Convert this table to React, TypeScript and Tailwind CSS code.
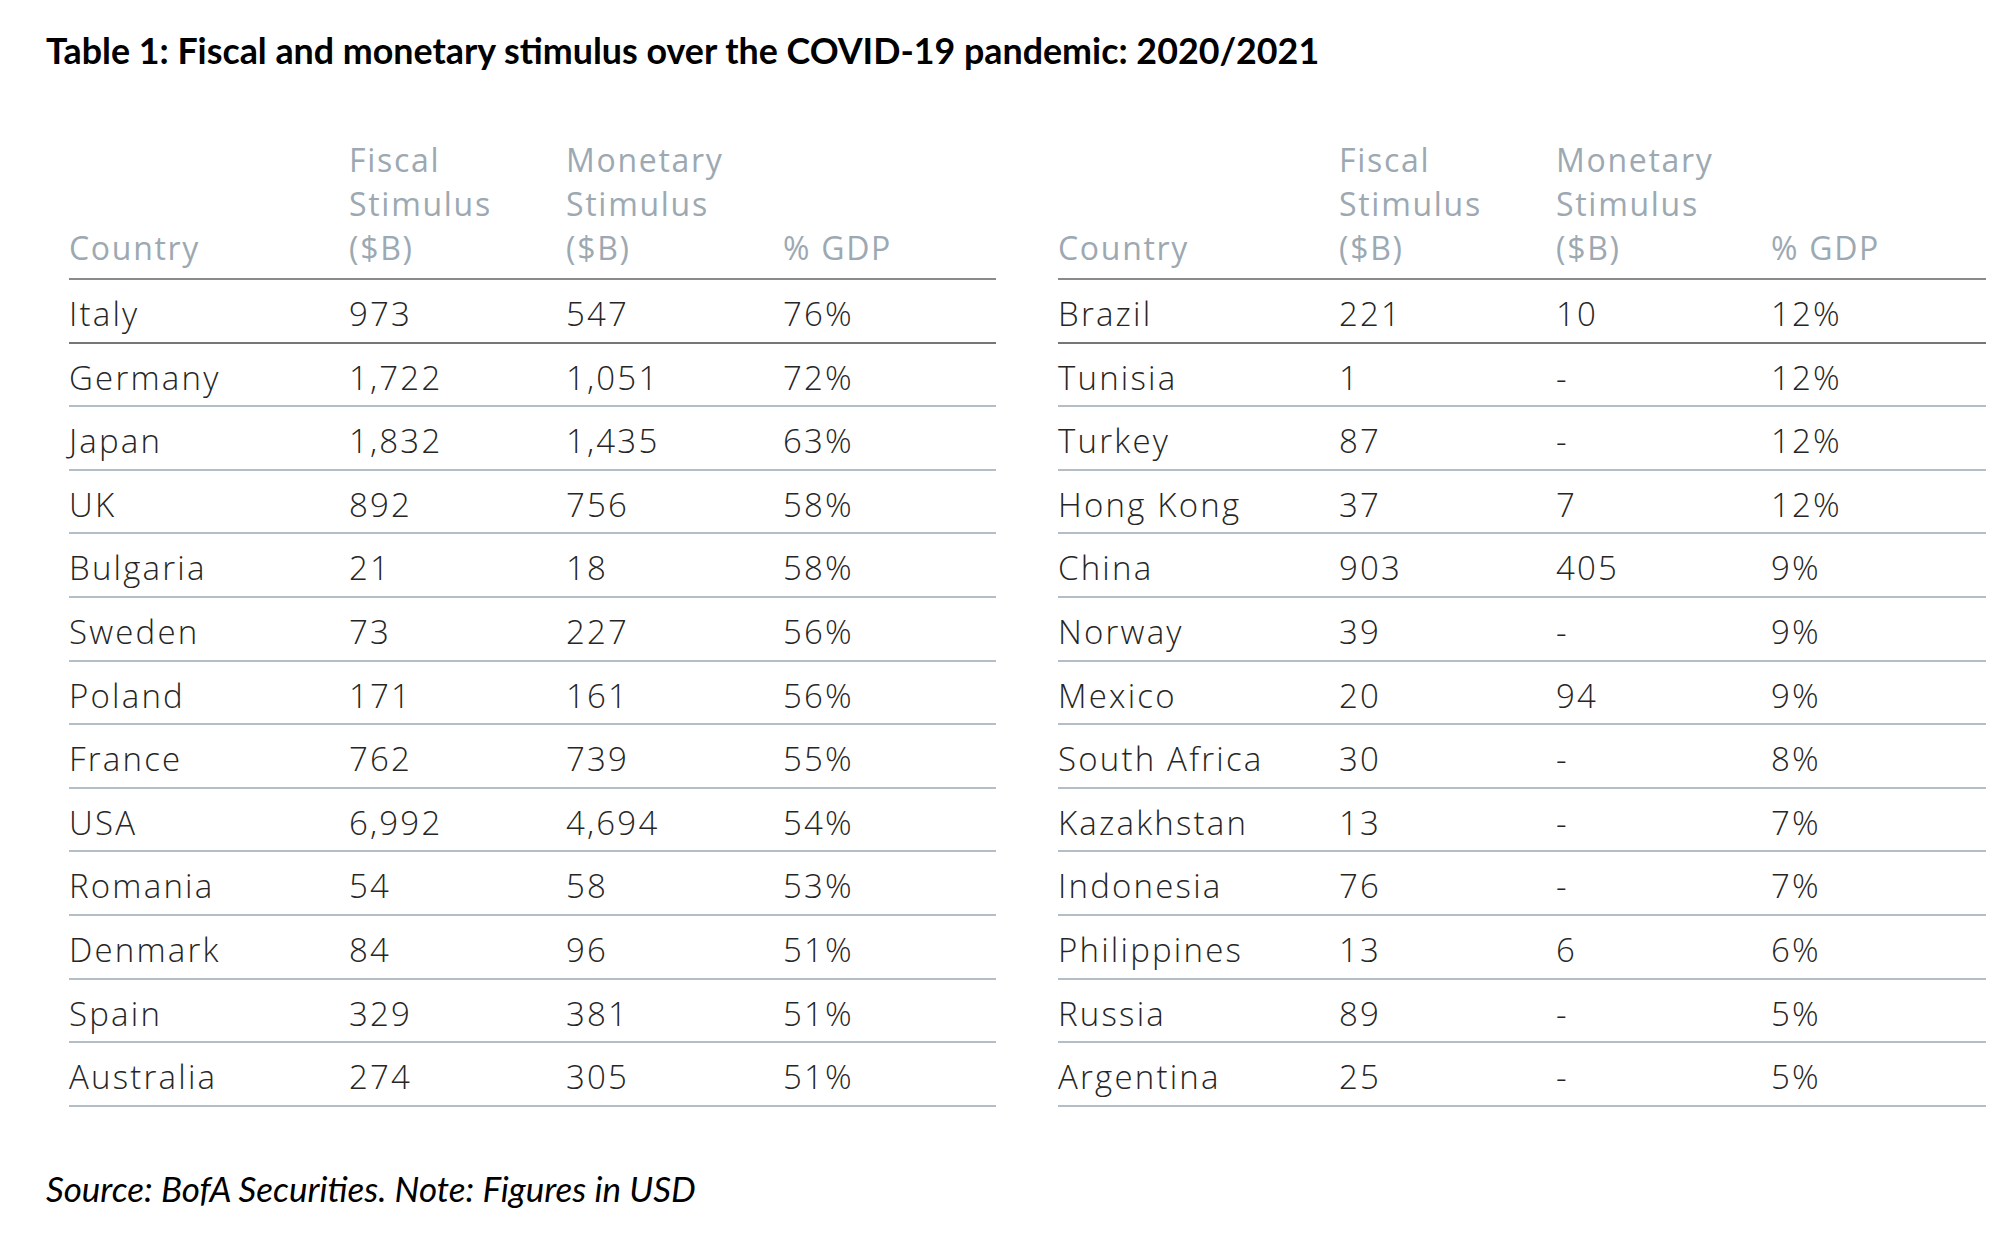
const left: [string, string, string, string][] = [
  ["Italy", "973", "547", "76%"],
  ["Germany", "1,722", "1,051", "72%"],
  ["Japan", "1,832", "1,435", "63%"],
  ["UK", "892", "756", "58%"],
  ["Bulgaria", "21", "18", "58%"],
  ["Sweden", "73", "227", "56%"],
  ["Poland", "171", "161", "56%"],
  ["France", "762", "739", "55%"],
  ["USA", "6,992", "4,694", "54%"],
  ["Romania", "54", "58", "53%"],
  ["Denmark", "84", "96", "51%"],
  ["Spain", "329", "381", "51%"],
  ["Australia", "274", "305", "51%"],
];

const right: [string, string, string, string][] = [
  ["Brazil", "221", "10", "12%"],
  ["Tunisia", "1", "-", "12%"],
  ["Turkey", "87", "-", "12%"],
  ["Hong Kong", "37", "7", "12%"],
  ["China", "903", "405", "9%"],
  ["Norway", "39", "-", "9%"],
  ["Mexico", "20", "94", "9%"],
  ["South Africa", "30", "-", "8%"],
  ["Kazakhstan", "13", "-", "7%"],
  ["Indonesia", "76", "-", "7%"],
  ["Philippines", "13", "6", "6%"],
  ["Russia", "89", "-", "5%"],
  ["Argentina", "25", "-", "5%"],
];

function StimulusTable({ rows, cols }: { rows: [string, string, string, string][]; cols: string }) {
  return (
    <div className="flex flex-col">
      {/* header */}
      <div
        className={`grid ${cols} h-[142px] items-end border-b-2 border-[#8a8a8a] pb-[8px] text-[32px] leading-[44px] tracking-[1.7px] text-[#9ca9b2]`}
      >
        <div>Country</div>
        <div>
          Fiscal
          <br />
          Stimulus
          <br />
          ($B)
        </div>
        <div>
          Monetary
          <br />
          Stimulus
          <br />
          ($B)
        </div>
        <div>% GDP</div>
      </div>
      {rows.map((r, i) => (
        <div
          key={r[0]}
          className={`grid ${cols} h-[63.6px] items-center border-b-2 pt-[6px] text-[33px] font-light tracking-[2.2px] text-[#262626] ${
            i === 0 ? "border-[#767676]" : "border-[#b3bec6]"
          }`}
        >
          {r.map((c, j) => (
            <div key={j}>{c}</div>
          ))}
        </div>
      ))}
    </div>
  );
}

export default function App() {
  return (
    <div className="min-h-screen w-[2008px] bg-white pl-[46px] pt-[30px] font-['Open_Sans',sans-serif]">
      <h1 className="font-['Lato',sans-serif] text-[35.8px] font-bold leading-[42px] text-black">
        Table 1: Fiscal and monetary stimulus over the COVID-19 pandemic: 2020/2021
      </h1>

      <div className="mt-[66px] flex gap-[62px] pl-[23px]">
        <div className="w-[927px]">
          <StimulusTable rows={left} cols="grid-cols-[280px_217px_217px_1fr]" />
        </div>
        <div className="w-[928px]">
          <StimulusTable rows={right} cols="grid-cols-[281px_217px_215px_1fr]" />
        </div>
      </div>

      <p className="mt-[63px] font-['Lato',sans-serif] text-[35px] italic leading-[36px] text-black">
        Source: BofA Securities. Note: Figures in USD
      </p>
    </div>
  );
}
